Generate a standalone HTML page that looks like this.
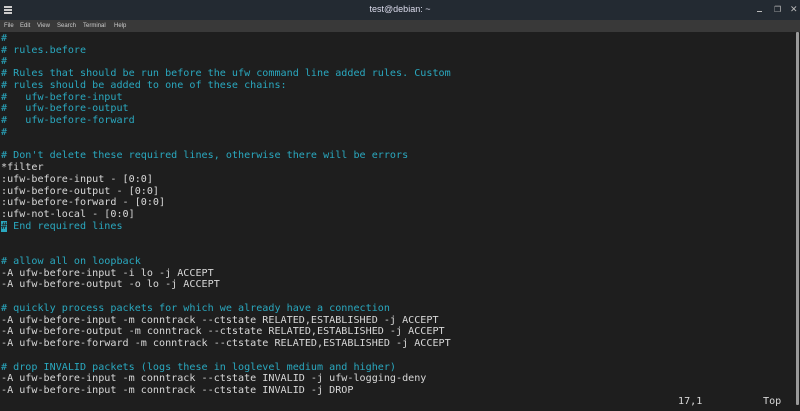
<!DOCTYPE html>
<html><head><style>
body{margin:0;width:800px;height:411px;overflow:hidden;background:#1e1e1e;font-family:"DejaVu Sans Mono","Liberation Mono",monospace}
#tb{position:absolute;left:0;top:0;width:800px;height:20px;background:#232a32;color:#dde;font:9px "Liberation Sans",sans-serif}
#mb{position:absolute;left:0;top:20px;width:800px;height:12px;background:#393939;color:#ccc;font:6px "Liberation Sans",sans-serif}
#mb span{position:absolute;top:3px}
#term{position:absolute;left:1px;top:33px;font-size:10.1px;line-height:11.73px;white-space:pre;color:#d8d8d8}
.c{color:#2aa8bf}
.cur{background:#2aa8bf;color:#1e1e1e}
.st{position:absolute;top:396px;font-size:10.1px;color:#d8d8d8;white-space:pre}
#sb{position:absolute;left:796px;top:32px;width:3px;height:373px;background:#9a9a9a;border-radius:1px}
</style></head><body>
<div id="tb">
<div style="position:absolute;left:4px;top:6px;width:8px;height:1.5px;background:#ccc;box-shadow:0 3px #ccc,0 6px #ccc"></div>
<div style="position:absolute;left:0;width:800px;top:4px;text-align:center">test@debian: ~</div>
<div style="position:absolute;left:757px;top:11px;width:5px;height:1px;background:#bbb"></div>
<div style="position:absolute;left:774px;top:5px;font-size:8px;color:#bbb">❐</div>
<div style="position:absolute;left:790px;top:4px;font-size:9px;color:#bbb">✕</div>
</div>
<div id="mb"><span style="left:4px">File</span><span style="left:20px">Edit</span><span style="left:37px">View</span><span style="left:57px">Search</span><span style="left:83px">Terminal</span><span style="left:114px">Help</span></div>
<div id="term"><span class="c">#
# rules.before
#
# Rules that should be run before the ufw command line added rules. Custom
# rules should be added to one of these chains:
#   ufw-before-input
#   ufw-before-output
#   ufw-before-forward
#</span>

<span class="c"># Don't delete these required lines, otherwise there will be errors</span>
*filter
:ufw-before-input - [0:0]
:ufw-before-output - [0:0]
:ufw-before-forward - [0:0]
:ufw-not-local - [0:0]
<span class="cur">#</span><span class="c"> End required lines</span>


<span class="c"># allow all on loopback</span>
-A ufw-before-input -i lo -j ACCEPT
-A ufw-before-output -o lo -j ACCEPT

<span class="c"># quickly process packets for which we already have a connection</span>
-A ufw-before-input -m conntrack --ctstate RELATED,ESTABLISHED -j ACCEPT
-A ufw-before-output -m conntrack --ctstate RELATED,ESTABLISHED -j ACCEPT
-A ufw-before-forward -m conntrack --ctstate RELATED,ESTABLISHED -j ACCEPT

<span class="c"># drop INVALID packets (logs these in loglevel medium and higher)</span>
-A ufw-before-input -m conntrack --ctstate INVALID -j ufw-logging-deny
-A ufw-before-input -m conntrack --ctstate INVALID -j DROP</div>
<div class="st" style="left:678px">17,1</div>
<div class="st" style="left:763px">Top</div>
<div id="sb"></div>
</body></html>
